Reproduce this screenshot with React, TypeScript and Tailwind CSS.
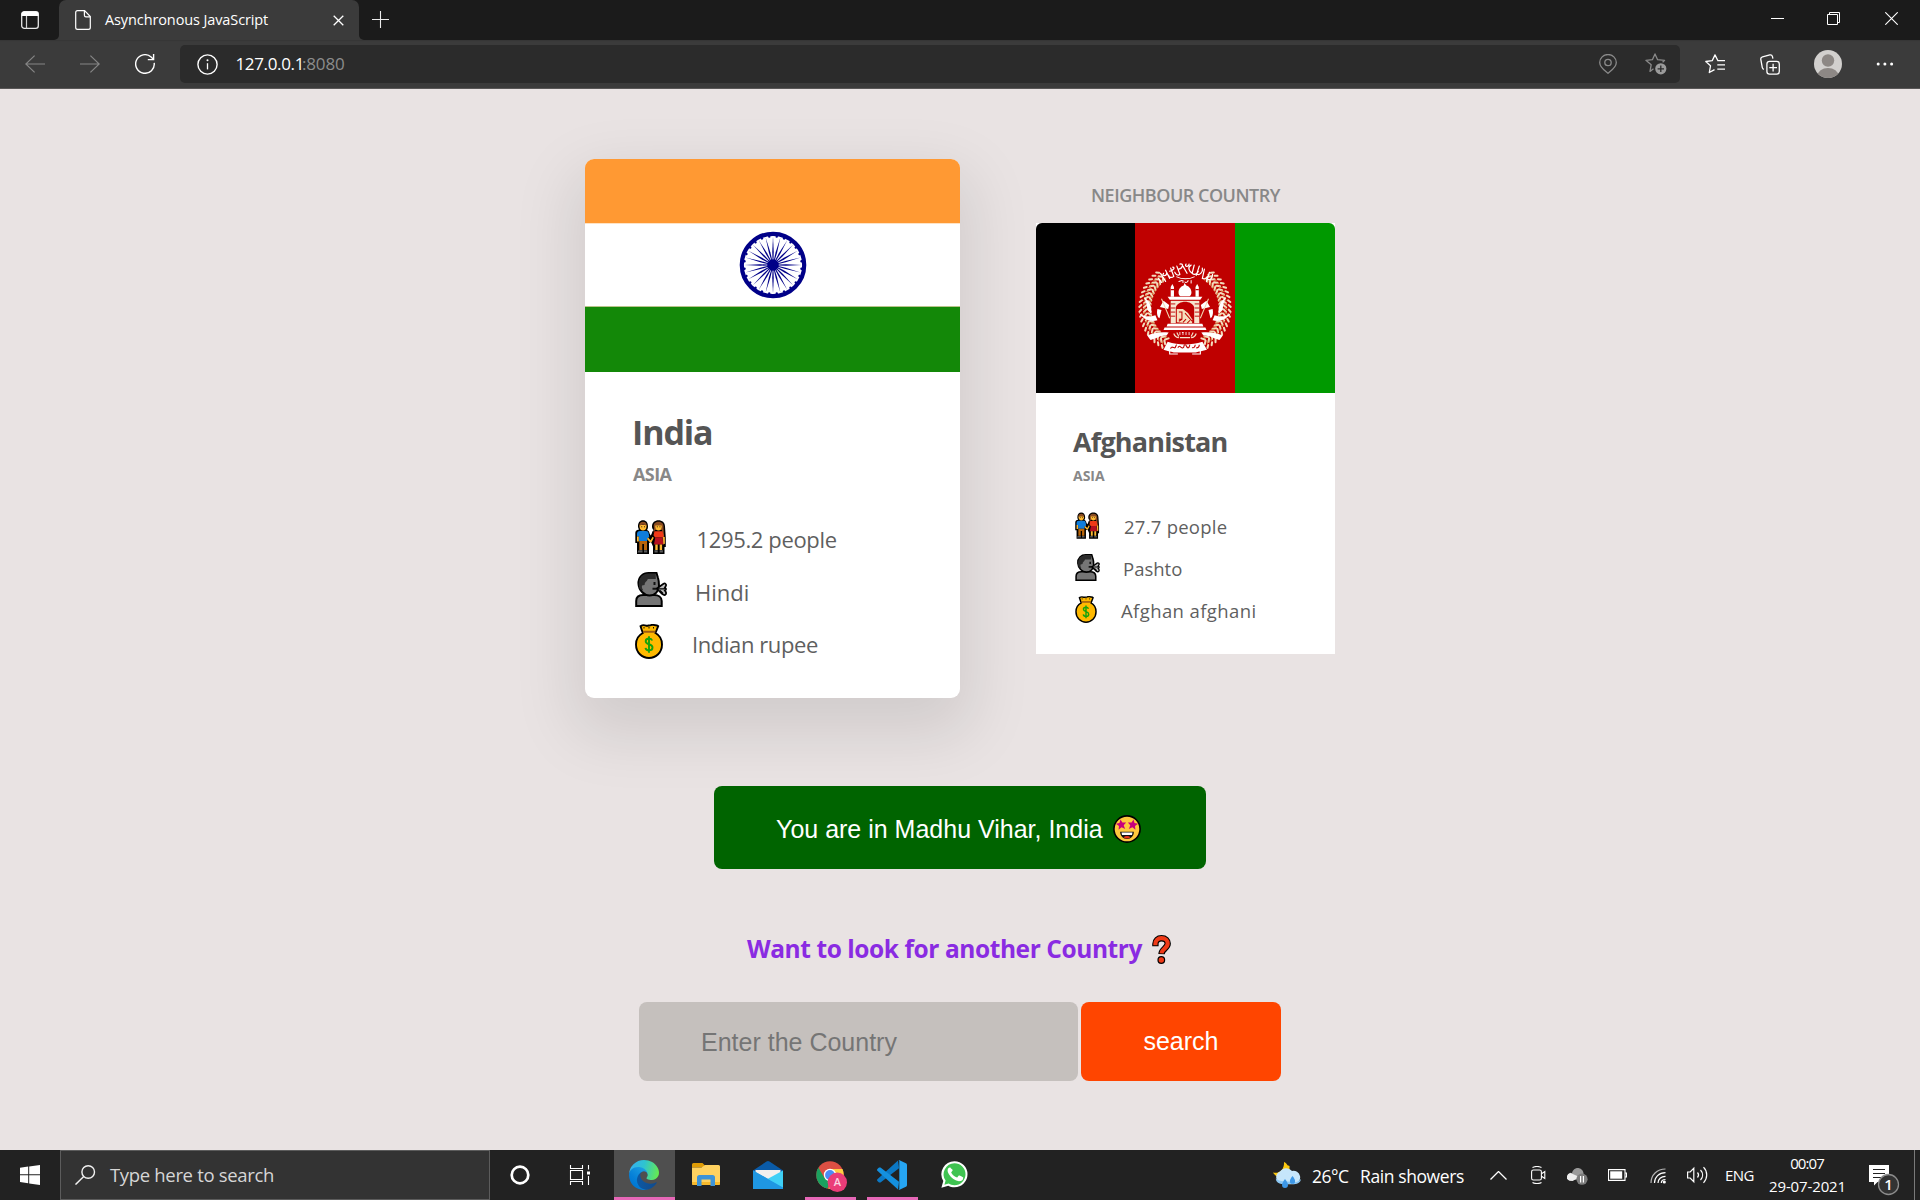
import type { ReactNode } from "react";

/* ---------- browser chrome ---------- */

function TabStrip() {
  return (
    <div className="flex h-10 bg-[#3b3b3b] text-white">
      <div className="flex w-[59px] items-center rounded-br-[5px] bg-[#1b1b1b] pl-[21px]">
        <svg className="h-[18px] w-[18px]" viewBox="0 0 18 18" fill="none">
          <rect x="0.7" y="0.7" width="16.6" height="16.6" rx="2.6" stroke="#e8e8e8" strokeWidth="1.3" />
          <path d="M0.5 5V3.2A2.7 2.7 0 0 1 3.2 0.5h11.6a2.7 2.7 0 0 1 2.7 2.7V5z" fill="#fff" />
          <path d="M5.5 5v12.5" stroke="#d0d0d0" strokeWidth="1.2" />
        </svg>
      </div>
      <div className="bg-[#1b1b1b]">
        <div className="flex h-10 w-[300px] items-center rounded-t-[7px] bg-[#3b3b3b] pl-4">
          <svg className="h-5 w-4 shrink-0" viewBox="0 0 16 20" fill="none" stroke="#fff" strokeWidth="1.2">
            <path d="M2.6 0.7h7l5.7 5.8v11a1.9 1.9 0 0 1-1.9 1.9H2.6a1.9 1.9 0 0 1-1.9-1.9V2.6A1.9 1.9 0 0 1 2.6.7z" />
            <path d="M9.4 0.9v4.3a1.6 1.6 0 0 0 1.6 1.6h4.2" />
          </svg>
          <span className="ml-3.5 w-[228px] whitespace-nowrap text-[14.5px] leading-5 tracking-[-0.11px]">
            Asynchronous JavaScript
          </span>
          <svg className="mt-px h-[11px] w-[11px] shrink-0" viewBox="0 0 11 11" stroke="#fff" strokeWidth="1.3">
            <path d="M0.7 0.7l9.6 9.6M10.3 0.7L0.7 10.3" />
          </svg>
        </div>
      </div>
      <div className="flex flex-1 items-center rounded-bl-[5px] bg-[#1b1b1b] pl-[13px]">
        <svg className="mb-px h-[17px] w-[17px]" viewBox="0 0 17 17" stroke="#ececec" strokeWidth="1.1">
          <path d="M8.5 0v17M0 8.5h17" />
        </svg>
        <div className="ml-auto flex items-center pr-[22px] pb-[3px]">
          <svg className="h-[13px] w-[13px]" viewBox="0 0 13 13" stroke="#fff">
            <path d="M0 6.5h13" />
          </svg>
          <svg className="ml-[43px] h-[13px] w-[13px]" viewBox="0 0 13 13" fill="none" stroke="#fff">
            <path d="M0.5 2.5h10v10h-10zM2.5 2.5v-2h10v10h-2" />
          </svg>
          <svg className="ml-[45px] h-[13px] w-[13px]" viewBox="0 0 13 13" stroke="#fff" strokeWidth="1.1">
            <path d="M0.3 0.3l12.4 12.4M12.7 0.3L0.3 12.7" />
          </svg>
        </div>
      </div>
    </div>
  );
}

function Toolbar() {
  return (
    <div className="flex h-[49px] items-center border-b border-[#595757] bg-[#3b3b3b] pl-[25px] shadow-[inset_0_2px_2px_-2px_rgba(0,0,0,0.3)]">
      <svg className="h-[18px] w-5" viewBox="0 0 20 18" fill="none" stroke="#868686" strokeWidth="1.2">
        <path d="M20 9H0.8M9.6 0.6L0.8 9l8.8 8.4" />
      </svg>
      <svg className="ml-[35px] h-[18px] w-5" viewBox="0 0 20 18" fill="none" stroke="#868686" strokeWidth="1.2">
        <path d="M0 9h19.2M10.4 0.6L19.2 9l-8.8 8.4" />
      </svg>
      <svg className="ml-[35px] h-5 w-5" viewBox="0 0 20 20" fill="none" stroke="#fff" strokeWidth="1.4">
        <path d="M19.2 8.8a9.3 9.3 0 1 1-3.1-5.8l2.3 2.3" />
        <path d="M18.6 0v5.6h-5.8" />
      </svg>
      <div className="ml-[25px] flex h-[38px] w-[1500px] items-center rounded-[5px] bg-[#2b2b2b] pl-[17px]">
        <svg className="h-[21px] w-[21px] shrink-0" viewBox="0 0 21 21" fill="none" stroke="#fff" strokeWidth="1.4">
          <circle cx="10.5" cy="10.5" r="9.6" />
          <path d="M10.5 9.2v6.2" strokeWidth="1.3" />
          <circle cx="10.5" cy="6.3" r="1" fill="#fff" stroke="none" />
        </svg>
        <div className="ml-[17.5px] flex whitespace-nowrap text-[17px] leading-6">
          <span className="w-[66.5px] tracking-[-0.35px] text-white">127.0.0.1</span>
          <span className="tracking-[-0.16px] text-[#8c8c8c]">:8080</span>
        </div>
        <svg className="ml-auto h-5 w-[18px] shrink-0" viewBox="0 0 18 20" fill="none" stroke="#8a8a8a" strokeWidth="1.3">
          <path d="M9 19.3c-1.2-1.1-8.3-5.6-8.3-10.8a8.3 8 0 0 1 16.6 0C17.3 13.7 10.2 18.2 9 19.3z" />
          <circle cx="9" cy="8.5" r="3.2" />
        </svg>
        <svg className="mr-[13px] ml-[28px] h-[22px] w-[22px] shrink-0" viewBox="0 0 22 22" fill="none">
          <path
            d="M8.5 15.7L5 18.4l1.2-6.7L0.9 7.3l6.5-.6L10 0.9l2.6 5.8 7 .6-2 1.9"
            stroke="#8a8a8a"
            strokeWidth="1.3"
            strokeLinejoin="round"
          />
          <circle cx="15.8" cy="15.8" r="5.6" fill="#9a9a9a" />
          <path d="M15.8 12.6v6.4M12.6 15.8H19" stroke="#2b2b2b" strokeWidth="1.3" />
        </svg>
      </div>
      <svg className="ml-[25px] h-5 w-5" viewBox="0 0 20 20" fill="none" stroke="#fff" strokeWidth="1.3">
        <path d="M12.8 6.5L10 0.9 7.2 6.7l-6.4.8 4.7 4.3-1.2 6.7 5.2-2.9" strokeLinejoin="round" />
        <path d="M12.3 6.7H20M12.3 10.9H20M12.3 15.1H20" />
      </svg>
      <svg className="ml-[35px] h-[21px] w-5" viewBox="0 0 20 21" fill="none" stroke="#fff" strokeWidth="1.3">
        <rect x="6.9" y="7.3" width="12.4" height="12.8" rx="2.6" />
        <path d="M13.1 9.8v7.7M9.3 13.7H17" />
        <path d="M3.9 15.3c-.9-.1-1.4-.9-1.6-1.7L.8 5.3c-.2-1.3.6-2.1 1.7-2.4L9.8.9c1.5-.3 2.3.4 2.6 1.5l.5 2.3" />
      </svg>
      <svg className="ml-[34px] h-7 w-7" viewBox="0 0 28 28">
        <clipPath id="avatar">
          <circle cx="14" cy="14" r="14" />
        </clipPath>
        <g clipPath="url(#avatar)">
          <rect width="28" height="28" fill="#d2d0ce" />
          <circle cx="14" cy="10.5" r="6.2" fill="#8d8885" />
          <ellipse cx="14" cy="26" rx="10.5" ry="8" fill="#8d8885" />
        </g>
      </svg>
      <svg className="ml-[34px] h-4 w-[18px]" viewBox="0 0 18 4" fill="#fff">
        <circle cx="2.2" cy="2" r="1.5" />
        <circle cx="8.9" cy="2" r="1.5" />
        <circle cx="15.6" cy="2" r="1.5" />
      </svg>
    </div>
  );
}

/* ---------- flags ---------- */

function IndiaFlag() {
  const spokes = Array.from({ length: 24 }, (_, i) => i * 15);
  return (
    <div className="flex h-[213px] flex-col">
      <div className="h-16 bg-[#ff9933]" />
      <div className="flex h-[84px] items-center justify-center border-t border-b border-t-[#ffe3c4] border-b-[#b9c48a] bg-white">
        <svg className="h-[68px] w-[68px]" viewBox="-34 -34 68 68" fill="#000088">
          <circle r="31.2" fill="none" stroke="#000088" strokeWidth="4.2" />
          <circle r="5.8" />
          {spokes.map((a) => (
            <g key={a} transform={`rotate(${a})`}>
              <path d="M0-28.5L-.75-13-.3 0H.3L.75-13z" />
              <circle cx="0" cy="-28.7" r="1.2" transform="rotate(7.5)" />
            </g>
          ))}
        </svg>
      </div>
      <div className="h-[65px] bg-[#138808]" />
    </div>
  );
}

function WheatSide() {
  const grains = Array.from({ length: 19 }, (_, i) => i);
  return (
    <g fill="none" strokeLinecap="round">
      {grains.map((i) => (
        <g key={i} transform={`rotate(${-142 + i * 6.2})`}>
          <path d="M-1.2 33.8l2.4 2.6M-1.2 40.3l2.4-2.4M-.8 44.8l2-2" stroke="#f3dcbc" strokeWidth="2" />
          <path d="M1.4 33.5l1.2 1.8M1.6 40.8l1.2-1.5" stroke="#d58b4e" strokeWidth="1.1" />
        </g>
      ))}
    </g>
  );
}

function Emblem() {
  return (
    <svg className="h-24 w-24" viewBox="-47 -47 94 94" fill="#fff">
      <g transform="scale(-1 1)">
        <WheatSide />
      </g>
      <WheatSide />
      {/* calligraphy arc */}
      <g fill="none" stroke="#fff" strokeWidth="1.2" strokeLinecap="round">
        <path d="M-26-29l3 4M-24-34l5 8M-21-34c-2 3 3 3 3 0M-19-37l4 8M-14-39l3 8c-2 2-5 1-5-1M-12-40c3 0 0 4-3 4M-8-41l3 8c-2 2-4 0-5-2M-5-43c4-1 3 4-1 5M-2-41l4 7M1-43c-2 3 3 3 3 0M6-42c-4 2-2 6 1 8M9-42l-2 8c2 2 5 1 6-2M14-41l-3 9M17-39c1 4-3 7-5 6M19-38l-2 9c2 1 4 0 5-2M24-35l-3 9M27-33c0 3-2 6-4 5" />
        <path d="M-8-30.500C-3-28 4-28 9-30.500M-6-26l3-1M0-25.500c1 1.500 3-.5 3-1.500M-2-27v2M6-27v2.500" strokeWidth="1" />
      </g>
      {/* mosque */}
      <path d="M-0.500-24.500L1.300-22C4.500-21 6.500-18 6.300-15 6.200-13.500 5.300-12 4.500-11.500h-9C-5.500-12-6.300-13.500-6.300-15-6.500-18-4.500-21-1.300-22z" />
      <path d="M-14-20.500l1.600-3 1.600 3V-11h-3.200zM10.300-20.500l1.600-3 1.600 3V-11h-3.200z" />
      <path d="M-14-18h3.200M10.300-18h3.200" stroke="#bf0000" />
      <path d="M-17-11h34l-2 2.800h-30z" />
      <path d="M-14-7h28v22H-14z" fill="#f6e6cf" />
      <path d="M-9 15V-.5C-8-4-4-6 0-6s8 2 9 5.500V15z" fill="#bf0000" />
      <path d="M-14-4h4.500M9.500-4H14M-14 0h4.500M9.500 0H14M-14 4h4.500M9.500 4H14M-14 8h4.500M9.500 8H14" stroke="#bf0000" strokeWidth="0.9" />
      <path d="M-8 14V1h6l5 4 4 6v4h-4z" fill="#f6dfbd" />
      <path d="M-6 4h3v7h-3M0 5l7 8M-6 13l3-2M-2 14l3-3M2 15l3-3" stroke="#bf0000" strokeWidth="1" fill="none" />
      <path d="M-17 15.500h34l1 2.500h-36zM-20 19h40l1 2.500h-42z" />
      {/* side flags */}
      <path d="M-21-7l-3.500 6 8 2 1-4zM-27 1l4 1-2 8c-2-1-3-5-2-9zM21-7l3.500 6-8 2-1-4zM27 1l-4 1 2 8c2-1 3-5 2-9z" />
      <path d="M-23-9l8 19M23-9l-8 19" stroke="#f3d9b4" strokeWidth="1" />
      {/* ribbons */}
      <path d="M-40-11c4 4 8 8 7 17l-4-5c0-5-2-8-3-12zM-45 5c5 4 10 4 16 2l2 5c-6 2-13 0-18-7zM-37 27c5-2 12-4 21-3l-2 3c-6-1-11 4-16 4z" />
      <path d="M40-11c-4 4-8 8-7 17l4-5c0-5 2-8 3-12zM45 5C40 9 35 9 29 7l-2 5c6 2 13 0 18-7zM37 27c-5-2-12-4-21-3l2 3c6-1 11 4 16 4z" />
      <path d="M-11 25c1 3 3 4 5 4M11 25c-1 3-3 4-5 4M-8 24l2 4M8 24l-2 4M-5 29h10" fill="none" stroke="#f6e6cf" strokeWidth="1.1" />
      <path d="M-5 23.500v3M-2 23.500v3M-3 24h1.500M1 23.500v3M4 23.500v3" stroke="#fff" strokeWidth="0.8" />
      <path d="M-17 33c11 3.500 23 3.500 34 0l4.500 8c-4 1-8 2-11 2.500H-11c-3-.5-7-1.500-10-2.500z" />
      <path d="M-15 42v3h8M15 42v3H7" fill="none" stroke="#fff" strokeWidth="1.1" />
      <path d="M-14 40c0-3 3-1 4-1s1-3 2-3M-7 39c2-4 3 1 5 0s0-3 2-3 1 3 3 3 1-3 2-3M7 38.500c1 1 3 0 3-2.500M11 39c2 0 3-1 3-3" fill="none" stroke="#bf0000" strokeWidth="1.1" />
    </svg>
  );
}

function AfghanFlag() {
  return (
    <div className="flex h-[170px] overflow-hidden rounded-t-md">
      <div className="w-[99px] bg-black" />
      <div className="flex w-[100px] items-center justify-center bg-[#bf0000]">
        <Emblem />
      </div>
      <div className="flex-1 bg-[#009900]" />
    </div>
  );
}

/* ---------- emoji-style icons ---------- */

function PeopleIcon({ className }: { className: string }) {
  return (
    <svg className={className} viewBox="0 0 32 34">
      <path
        d="M3 6.500C3 2.500 5 .3 8 .3s5 2.200 5 6.200c0 1.500-.3 2.700-1 3.500 1.500.5 2.300 1.500 2.600 3.500l1 2 1-1.500c.5-2 1-3.200 2.200-3.800C17.200 9 17 7.500 17 6.500 17 2.500 20 .3 23.500.3S30 2.500 30 6.500l.8 11.500V27H29.500v7H18v-7.500L16 22l-2 1v11H2v-11H.3V13c0-2 1-3 3.700-3.500C3.300 8.500 3 7.500 3 6.500z"
      />
      <path d="M4.500 6.500C4.500 9 6 10.500 8 10.500s3.500-1.500 3.500-4V5h-7z" fill="#ffb932" />
      <path d="M4.300 5.800C4.300 3 5.700 1.800 8 1.800s3.700 1.200 3.700 4C9 4.500 7 4.500 4.300 5.800z" fill="#8a4b20" />
      <path d="M2 14c0-2 1-3 3-3h6c2 0 2.500 1 2.800 3l.4 3-2 1.500V21H4v-4.500H2z" fill="#0f7ddb" />
      <path d="M2 16.500h1.800v5H2zM13 17.500l2.600 2.700 2-3.500 1.200 1-2.300 4.500h-1.700L12 19z" fill="#ffb932" />
      <path d="M4.300 21H12v9H9V24H7.300v6h-3z" fill="#b9650a" />
      <path d="M3.500 30.300h4v2.200h-5zM9 30.300h3.200v2.200H9z" fill="#5b5b5b" />
      <path d="M19 8c-1-4 1-6.200 4.500-6.200S29 4 28.500 8l1.200 16h-2L27 10h-7l-1.500 3z" fill="#8a4b20" />
      <path d="M20.300 6.500c0 2.500 1.300 4 3.200 4s3.200-1.500 3.200-4V5.500h-6.400z" fill="#ffb932" />
      <path d="M19.500 11.300h8l1.300 5-1.500 1.200H20l-1.500-2.200z" fill="#f03a17" />
      <path d="M20.300 17.500h6.900l1.300 7h-9.500z" fill="#b50f1f" />
      <path d="M28 17h1.800v6.500l-1.300 1zM20.300 24.500h2.400V30h-2.400zM24.700 24.500h2.400V30h-2.400z" fill="#ffb932" />
      <path d="M19.500 30.300h3.200v2.200h-3.200zM24.700 30.300h3.200v2.200h-3.200z" fill="#5b5b5b" />
      <path d="M6.300 6.800h.9M9 6.800h.9M21.800 6.800h.9M24.500 6.800h.9" stroke="#000" strokeWidth="0.9" />
    </svg>
  );
}

function SpeakingIcon({ className }: { className: string }) {
  return (
    <svg className={className} viewBox="0 0 32 35">
      <path d="M1.200 34v-5c0-4 3-6 7-6h11c4 0 7.500 2 7.500 6v5z" fill="#757575" stroke="#000" strokeWidth="2" />
      <path d="M3.500 12C3 5 8 1 13.500 1h8l1.500 5c.8 2 1 5 1 8 0 5-4 9.500-9.500 9.500S3.800 18 3.500 12z" fill="#757575" stroke="#000" strokeWidth="2" />
      <path d="M4 15C3 6 7 2 13.500 1.500h7.300V7h-8c-1 3-3 2.500-3.200 6L7 13.500c-.5 2 .3 3.500 1.300 5C5.500 18 4.300 17 4 15z" fill="#2b2b2b" />
      <path d="M19.500 10v3M17.500 16.700h4.500" stroke="#111" strokeWidth="2" />
      <path d="M22 16.500l6.500-4.700c1.700-1 3.200.8 2.300 2.200l-1 1.800c1.700.2 1.700 2.200 0 2.700l1 1.500c.9 1.800-.6 3.600-2.300 2.800-2.200-1-4.500-3.800-6.500-6.300z" fill="#bdbdbd" stroke="#000" strokeWidth="1.7" />
      <path d="M23 16.800h7M25 18.500l3 3" stroke="#000" strokeWidth="1.3" />
    </svg>
  );
}

function MoneyBagIcon({ className }: { className: string }) {
  return (
    <svg className={className} viewBox="0 0 28 35">
      <path
        d="M5.500 2.200C7.500.8 9.500 1 11 1.600c1.500.6 3-.6 4.500-.4 1.500-.5 3-.6 4.500 0 1 .2 2.500.1 3.200 1L20.500 9C25 11.500 27 16 27 20.500 27 28.500 21 34 14 34S1 28.500 1 20.500C1 16 3 11.500 7.800 9z"
        fill="#ffb900"
        stroke="#000"
        strokeWidth="1.9"
      />
      <path d="M8 7.700h12.300" stroke="#9a5b12" strokeWidth="2" />
      <path d="M9 4.500v-1.500M14 4.500v-1.500M18.500 4.500v-1.500" stroke="#000" strokeWidth="0.9" />
      <path
        d="M17.200 16.500c-.5-1.300-1.600-2-3.200-2-2 0-3.300 1-3.300 2.700 0 3.800 6.800 2.300 6.800 6.300 0 1.900-1.500 2.900-3.500 2.900-1.800 0-3.200-.9-3.500-2.600M14 12.300v16.500"
        fill="none"
        stroke="#16a30c"
        strokeWidth="1.9"
      />
    </svg>
  );
}

function StarStruckIcon() {
  const star = "M0-5.200L1.500-1.800 5.200-1.500 2.400 1 3.300 4.800 0 2.800-3.300 4.800-2.400 1-5.200-1.500-1.500-1.800z";
  return (
    <svg className="h-7 w-7" viewBox="0 0 28 28">
      <circle cx="14" cy="14" r="13.1" fill="#ffc83d" stroke="#000" strokeWidth="1.6" />
      <path d={star} fill="#c8007c" transform="translate(8.200 9.600) rotate(-8)" />
      <path d={star} fill="#c8007c" transform="translate(19.800 9.600) rotate(8)" />
      <path d="M7.200 16.800h13.600c.3 4-2.800 7.200-6.800 7.200s-7-3.200-6.800-7.200z" fill="#111" />
      <path d="M8.500 17.500h11l-.5 2.400H9z" fill="#fff" />
      <path d="M10.500 22.300c2-1.600 5-1.600 7 0-2 1.600-5 1.600-7 0z" fill="#e8341c" />
    </svg>
  );
}

function QuestionMarkIcon() {
  return (
    <svg className="h-[29px] w-[19px]" viewBox="0 0 19 29" fill="none">
      <path d="M3.400 11.200V9C3.400 5.500 6 3.200 9.500 3.200c4 0 6.200 2.400 6.200 5.400 0 4.800-6 5.200-6.200 10.500" stroke="#000" strokeWidth="6.4" />
      <circle cx="9.3" cy="25" r="3.9" fill="#000" />
      <path d="M3.400 10.200V9C3.400 5.500 6 3.200 9.500 3.200c4 0 6.200 2.400 6.200 5.400 0 4.800-6 5.200-6.200 9.800" stroke="#f03a17" strokeWidth="4.2" />
      <circle cx="9.3" cy="25" r="2.7" fill="#f03a17" />
    </svg>
  );
}

/* ---------- page ---------- */

function IndiaCard() {
  return (
    <article className="h-[539px] w-[375px] overflow-hidden rounded-[9px] bg-white text-[#555] shadow-[0_25px_62px_12px_rgba(0,0,0,0.1)]">
      <IndiaFlag />
      <div className="pt-10 pl-12">
        <h3 className="-ml-px h-10 text-[34px] leading-10 font-bold tracking-[-1.1px]">India</h3>
        <h4 className="mt-3 h-5 text-[18px] leading-5 font-bold tracking-[-0.6px] text-[#888]">ASIA</h4>
        <div className="mt-[29px] flex flex-col text-[22px] leading-[30px] whitespace-nowrap text-[#5f5f5f]">
          <p className="flex h-[52.5px] items-center">
            <PeopleIcon className="mr-[29.5px] mb-[5px] ml-[2px] h-[34px] w-8" />
            <span className="tracking-[-0.36px]">1295.2 people</span>
          </p>
          <p className="flex h-[52.5px] items-center">
            <SpeakingIcon className="mr-[28px] mb-[5px] ml-[2px] h-[35px] w-8" />
            <span>Hindi</span>
          </p>
          <p className="flex h-[52.5px] items-center">
            <MoneyBagIcon className="mr-[29px] mb-[5px] ml-[2px] h-[35px] w-7" />
            <span className="tracking-[-0.4px]">Indian rupee</span>
          </p>
        </div>
      </div>
    </article>
  );
}

function NeighbourCard() {
  return (
    <article className="mt-[14px] h-[431px] w-[299px] bg-white text-[#555]">
      <AfghanFlag />
      <div className="pt-[32px] pl-[37px]">
        <h3 className="h-[33px] text-[27px] leading-[33px] font-bold tracking-[-0.83px]">Afghanistan</h3>
        <h4 className="mt-2 h-[19px] text-[14px] leading-[19px] font-bold text-[#888]">ASIA</h4>
        <div className="mt-[21px] flex flex-col text-[18.5px] leading-6 whitespace-nowrap text-[#5f5f5f]">
          <p className="flex h-[42px] items-center">
            <PeopleIcon className="mr-6 mb-[3px] ml-[2px] h-[27px] w-[25px]" />
            <span className="tracking-[0.25px]">27.7 people</span>
          </p>
          <p className="flex h-[42px] items-center">
            <SpeakingIcon className="mr-[23px] mb-[3px] ml-[2px] h-[27px] w-[25px]" />
            <span>Pashto</span>
          </p>
          <p className="flex h-[42px] items-center">
            <MoneyBagIcon className="mr-6 mb-[3px] ml-[2px] h-[27px] w-[22px]" />
            <span className="tracking-[0.4px]">Afghan afghani</span>
          </p>
        </div>
      </div>
    </article>
  );
}

function Page() {
  return (
    <main className="flex flex-1 flex-col items-center bg-[#e9e3e3] pt-[70px]">
      <section className="flex h-[539px] items-start gap-[76px]">
        <IndiaCard />
        <div className="flex flex-col items-center pt-[22px]">
          <h5 className="h-7 text-[18px] leading-7 font-semibold tracking-[-0.48px] text-[#888]">NEIGHBOUR COUNTRY</h5>
          <NeighbourCard />
        </div>
      </section>
      <div className="mt-[88px] flex h-[83px] w-[492px] items-center rounded-[8px] bg-[#006400] pt-[3px] pl-[62px] font-['Liberation_Sans',sans-serif] text-[25px] leading-8 whitespace-nowrap text-white">
        <span className="w-[337px]">You are in Madhu Vihar, India</span>
        <StarStruckIcon />
      </div>
      <div className="mt-[60px] mr-[2px] flex h-10 w-[424px] items-center justify-between text-[24.5px] leading-10 font-bold whitespace-nowrap text-[#8a2be2]">
        <span className="tracking-[-0.43px]">Want to look for another Country</span>
        <QuestionMarkIcon />
      </div>
      <form className="mt-[33px] flex gap-[3px] font-['Liberation_Sans',sans-serif] text-[25px]">
        <input
          className="h-[79px] w-[439px] rounded-[8px] bg-[#c5c0bd] pt-px pl-[62px] placeholder:text-[#757575]"
          placeholder="Enter the Country"
        />
        <button type="button" className="h-[79px] w-[200px] rounded-[8px] bg-[#ff4500] pt-px text-white">
          search
        </button>
      </form>
    </main>
  );
}

/* ---------- taskbar ---------- */

function AppSlot({ children, active = false, running = false }: { children: ReactNode; active?: boolean; running?: boolean }) {
  return (
    <div className={active ? "flex w-[61px] flex-col items-center bg-[#4f4f4f]" : "flex w-[62px] flex-col items-center"}>
      <div className="flex h-[47px] items-center pt-[3px]">{children}</div>
      {active && <div className="h-[3px] w-full bg-[#e667b7]" />}
      {running && <div className="h-[3px] w-[51px] bg-[#e667b7]" />}
    </div>
  );
}

function EdgeLogo() {
  return (
    <svg className="mr-px h-[30px] w-[30px]" viewBox="0 0 256 256">
      <defs>
        <linearGradient id="e1" x1="63" y1="178" x2="241" y2="178" gradientUnits="userSpaceOnUse">
          <stop offset="0" stopColor="#0c59a4" />
          <stop offset="1" stopColor="#114a8b" />
        </linearGradient>
        <linearGradient id="e2" x1="157" y1="98" x2="46" y2="219" gradientUnits="userSpaceOnUse">
          <stop offset="0" stopColor="#1b9de2" />
          <stop offset="0.2" stopColor="#1595df" />
          <stop offset="0.7" stopColor="#0680d7" />
          <stop offset="1" stopColor="#0078d4" />
        </linearGradient>
        <linearGradient id="e3" x1="10" y1="60" x2="250" y2="120" gradientUnits="userSpaceOnUse">
          <stop offset="0" stopColor="#35b1ee" />
          <stop offset="0.45" stopColor="#2fc3d0" />
          <stop offset="1" stopColor="#66eb4f" />
        </linearGradient>
      </defs>
      <path fill="url(#e1)" d="M231 190.500a94 94 0 0 1-10.500 4.700 101.900 101.900 0 0 1-35.900 6.500c-47.300 0-88.500-32.500-88.500-74.300a31.500 31.500 0 0 1 16.400-27.300c-42.800 1.800-53.800 46.400-53.800 72.500 0 74 68.100 81.400 82.800 81.400 7.900 0 19.800-2.300 27-4.600l1.300-.4a128.300 128.300 0 0 0 66.600-52.800 4 4 0 0 0-5.400-5.700z" />
      <path fill="url(#e2)" d="M105.700 241.400a79.200 79.200 0 0 1-22.700-21.300 80.700 80.700 0 0 1 29.500-120c3.200-1.500 8.500-4.100 15.600-4a32.400 32.400 0 0 1 25.700 13 31.900 31.900 0 0 1 6.300 18.700c0-.2 24.500-79.600-80-79.600-43.900 0-80 41.600-80 78.200a130.200 130.200 0 0 0 12.100 56 128 128 0 0 0 156.400 67 75.600 75.600 0 0 1-62.800-8z" />
      <path fill="url(#e3)" d="M152.300 148.900c-.9 1-3.400 2.500-3.400 5.600 0 2.600 1.700 5.200 4.800 7.300 14.300 10 41.400 8.600 41.500 8.600a59.600 59.600 0 0 0 30.300-8.300 61.400 61.400 0 0 0 30.400-52.900c.3-22.400-8-37.300-11.300-43.900C223.500 23.900 177.700 0 128 0A128 128 0 0 0 0 126.200c.5-36.500 36.800-66 80-66 3.500 0 23.500.3 42 10 16.300 8.600 24.900 19 30.800 29.200 6.200 10.700 7.300 24.100 7.300 29.500s-2.700 13.300-7.800 20z" />
    </svg>
  );
}

function ExplorerLogo() {
  return (
    <svg className="mb-[1px] h-6 w-7" viewBox="0 0 28 24">
      <path d="M0 1.500A1.500 1.500 0 0 1 1.500 0h9l2.500 2.500-2 2H0z" fill="#df9c06" />
      <path d="M0 4.500h9.500L13 2h13.500A1.500 1.500 0 0 1 28 3.500v17a1.500 1.500 0 0 1-1.500 1.500h-25A1.500 1.500 0 0 1 0 20.500z" fill="#ffd260" />
      <path d="M0 19h28v1.500a1.500 1.500 0 0 1-1.500 1.500h-25A1.500 1.500 0 0 1 0 20.500z" fill="#f6b92c" />
      <path d="M5 23V14.500A2.500 2.500 0 0 1 7.500 12h13a2.500 2.500 0 0 1 2.500 2.500V23h-4.500v-6.500h-9V23z" fill="#3c93d8" />
    </svg>
  );
}

function MailLogo() {
  return (
    <svg className="mb-[1px] h-[28px] w-[30px]" viewBox="0 0 30 28">
      <path d="M0 9.500L13.500.6a2.700 2.700 0 0 1 3 0L30 9.500v3H0z" fill="#0a5ba8" />
      <path d="M2.500 9h25v12h-25z" fill="#f2f0ee" />
      <path d="M0 9.500L30 26.500V28H0z" fill="#2ba3e6" />
      <path d="M30 9.500L14.500 18 30 28z" fill="#3fd0f6" />
      <path d="M0 28V9.500L15 18l15 8.500V28z" fill="#1f97e2" />
    </svg>
  );
}

function ChromeLogo() {
  return (
    <svg className="mt-[2px] ml-[2px] h-[31px] w-[31px]" viewBox="0 0 31 31">
      <clipPath id="chrome">
        <circle cx="14" cy="14" r="13.7" />
      </clipPath>
      <g clipPath="url(#chrome)">
        <path d="M0 0h28v28H0z" fill="#dd4f43" />
        <path d="M14 8h14v20H12l7-11z" fill="#ffcd42" />
        <path d="M2 6l6.500 11 5.500 3.500-3 8H0V5z" fill="#1aa15f" />
      </g>
      <circle cx="14" cy="14" r="6.2" fill="#fff" />
      <circle cx="14" cy="14" r="4.9" fill="#4c8bf5" />
      <circle cx="21.3" cy="21.3" r="9.7" fill="#ea3c78" />
      <text x="21.3" y="25.3" textAnchor="middle" fontSize="11" fontWeight="600" fill="#fbd3e0">
        A
      </text>
    </svg>
  );
}

function CodeLogo() {
  return (
    <svg className="h-[30px] w-[30px]" viewBox="0 0 30 30">
      <path d="M22 8.300L3.500 22.500 2 22.500.4 20.900c-.5-.5-.5-1.200 0-1.700L21 .5z" fill="#0b78c4" />
      <path d="M22 21.700L3.500 7.500 2 7.500.4 9.100c-.5.5-.5 1.200 0 1.700L21 29.500z" fill="#1490df" />
      <path d="M22 0l6.900 3.200c.7.300 1.100 1 1.100 1.700v20.200c0 .7-.4 1.400-1.100 1.700L22 30c-.4 0-.7-.2-1-.5.600.5 1.300 0 1.300-.7V1.200c0-.7-.7-1.200-1.300-.7.3-.3.6-.5 1-.5z" fill="#26a5f2" />
    </svg>
  );
}

function WhatsAppLogo() {
  return (
    <svg className="mb-[2px] h-[27px] w-[27px]" viewBox="0 0 27 27">
      <path d="M13.500.3A13 13 0 0 1 13.500 26.300c-2.300 0-4.300-.5-6.200-1.500L.4 26.700l1.900-6.700A13 13 0 0 1 13.500.3z" fill="#fff" />
      <path d="M13.500 2.300a11 11 0 0 1 0 22c-2.200 0-4.100-.6-5.800-1.700l-4.300 1.200 1.200-4.200A11 11 0 0 1 13.500 2.300z" fill="#3fc351" />
      <path
        d="M9.800 7.200c-.3-.7-.6-.7-1-.7-1 0-2.200 1.200-2.200 3 0 1.900 1.300 3.700 1.500 4 .2.300 2.700 4.200 6.600 5.700 3.200 1.300 3.900 1 4.600.9.800-.1 2.300-1 2.600-1.900.3-.9.300-1.700.2-1.900-.1-.2-3.300-1.700-3.700-1.800-.3-.1-.6-.1-.8.200-.3.400-1 1.300-1.200 1.500-.2.300-.5.300-.8.100-.4-.2-1.700-.6-3.100-1.900-1.200-1-2-2.300-2.200-2.700-.2-.3 0-.6.200-.8l1.100-1.400c.1-.3 0-.5 0-.7z"
        fill="#fff"
      />
    </svg>
  );
}

function WeatherIcon() {
  return (
    <svg className="h-[27px] w-7" viewBox="0 0 28 27">
      <path d="M11 0c1.500.6 2.700 1.700 3.500 3.200L16.500 4v9L4 14.500C2.500 13.500 1 12.200 0 10.500 6 12 11.500 8 11 0z" fill="#fbc80f" />
      <path d="M8.500 21.500a6.300 6.300 0 0 1-1.500-12 7.500 7.500 0 0 1 12-.5 6.200 6.200 0 1 1 3 13c-2 .5-12 .5-13.500-.5z" fill="#c6e6fb" />
      <path d="M9 22a6 6 0 0 1-6.300-5.500C6.500 20 14 19 20 20c3 .5 6-.5 8-3-.5 4-4 5-7 5z" fill="#8cc8f4" />
      <path d="M12 17c2 2.500 3 4.500 3 6a3 3 0 0 1-6 0c0-1.500 1-3.500 3-6zM19.500 14c1.800 2.300 2.600 3.800 2.600 5.200a2.600 2.600 0 0 1-5.200 0c0-1.400.8-2.900 2.600-5.200z" fill="#3d97e6" />
    </svg>
  );
}

function Taskbar() {
  return (
    <footer className="flex h-[50px] bg-[#222222] text-white">
      <div className="flex w-[60px] items-center justify-center">
        <svg className="h-5 w-5" viewBox="0 0 20 20" fill="#fff">
          <path d="M0 2.700L8.200 1.600v7.700H0zM9.200 1.400L20 0v9.300H9.200zM0 10.300h8.200v7.900L0 17.100zM9.200 10.300H20V20L9.200 18.400z" />
        </svg>
      </div>
      <div className="flex w-[430px] items-center border border-[#5c5c5c] bg-[#333333] pl-[14px]">
        <svg className="h-5 w-[21px]" viewBox="0 0 21 20" fill="none" stroke="#f2f2f2" strokeWidth="1.4">
          <circle cx="13.2" cy="7" r="6.3" />
          <path d="M8.700 11.500L0.500 19.600" />
        </svg>
        <span className="ml-3.5 text-[18.5px] leading-6 tracking-[-0.33px] whitespace-nowrap text-[#d6d6d6]">Type here to search</span>
      </div>
      <div className="flex w-[60px] items-center justify-center">
        <svg className="h-5 w-5" viewBox="0 0 20 20" fill="none" stroke="#fff" strokeWidth="2.7">
          <circle cx="10" cy="10" r="8.3" />
        </svg>
      </div>
      <div className="flex w-16 items-center pl-[19px]">
        <svg className="mb-px h-5 w-[22px]" viewBox="0 0 22 20" fill="none" stroke="#fff" strokeWidth="1.1">
          <path d="M1.500 0v3.500h12V0M1.500 20v-3.500h12V20M1.500 5.500h12v9h-12zM19.500 0v4.500M19.500 11v9" />
          <path d="M18 6.500h3v3h-3z" fill="#fff" stroke="none" />
        </svg>
      </div>
      <AppSlot active>
        <EdgeLogo />
      </AppSlot>
      <AppSlot>
        <ExplorerLogo />
      </AppSlot>
      <AppSlot>
        <MailLogo />
      </AppSlot>
      <AppSlot running>
        <ChromeLogo />
      </AppSlot>
      <AppSlot running>
        <CodeLogo />
      </AppSlot>
      <AppSlot>
        <WhatsAppLogo />
      </AppSlot>
      <div className="ml-auto flex items-center whitespace-nowrap">
        <WeatherIcon />
        <span className="ml-[11px] w-12 pt-[2px] text-[17.5px] leading-6 tracking-[-0.5px]">26°C</span>
        <span className="w-[130px] pt-[2px] text-[17.5px] leading-6 tracking-[-0.4px]">Rain showers</span>
        <svg className="h-[9px] w-[17px]" viewBox="0 0 17 9" fill="none" stroke="#fff" strokeWidth="1.3">
          <path d="M0.500 8.500l8-8 8 8" />
        </svg>
        <svg className="ml-[24px] h-[18px] w-[15px]" viewBox="0 0 15 18" fill="none" stroke="#fff" strokeWidth="1.1">
          <rect x="0.6" y="4" width="9.8" height="10" rx="1.8" />
          <path d="M10.500 7.700l3.300-2.200v7l-3.300-2.200M1.500 1.500c2.500-1.200 6.500-1.200 9 0M1.500 16.500c2.500 1.200 6.500 1.200 9 0" />
        </svg>
        <svg className="mt-[2px] ml-[21px] h-[17px] w-[21px]" viewBox="0 0 21 17">
          <path d="M5 5a5.500 5.500 0 0 1 11.500 1.500L17 10 3 13A4.500 4.500 0 0 1 3 4.800z" fill="#9a9a9a" />
          <path d="M2 12.500A4 4 0 0 1 3.500 5l9 4-7 4z" fill="#ededed" />
          <circle cx="15" cy="11.2" r="5.6" fill="#7d7d7d" />
          <path d="M13.600 8v6.500M16.400 8v6.500" stroke="#fff" strokeWidth="1.2" />
        </svg>
        <svg className="ml-5 h-3 w-[19px]" viewBox="0 0 19 12" fill="none" stroke="#fff" strokeWidth="1.1">
          <path d="M0.500 0.600h16.500v10.800H0.500zM17 4h1.500v4H17" />
          <path d="M2.200 2.300h12v7.400h-12z" fill="#fff" stroke="none" />
        </svg>
        <svg className="mt-[2px] ml-[23px] h-4 w-[17px]" viewBox="0 0 17 16" fill="none" stroke="#fff" strokeWidth="1.2">
          <path d="M1 15C1 7 7 1 15.500 1" stroke="#b5b5b5" />
          <path d="M4.500 15c0-6 4.500-10.300 11-10.300M8 15c0-3.700 3-6.700 7.500-6.700M11.300 15c0-2 1.700-3.500 4.200-3.500" />
          <circle cx="14.3" cy="14" r="1.6" fill="#fff" stroke="none" />
        </svg>
        <svg className="ml-5 h-[18px] w-[21px]" viewBox="0 0 21 18" fill="none" stroke="#fff" strokeWidth="1.2">
          <path d="M0.600 6h2.600l3.600-3.700v13.400L3.200 12H0.600zM10.500 6.500c1.300 1.500 1.300 3.500 0 5M13.500 4c2.800 3 2.800 7 0 10M16.500 1.200c4.300 4.500 4.300 11 0 15.600" />
        </svg>
        <span className="ml-[17px] w-[45px] text-[15px] leading-5 tracking-[-0.6px]">ENG</span>
        <div className="flex w-[75px] flex-col items-center text-[15px] leading-[23px]">
          <span className="mr-px tracking-[-0.9px]">00:07</span>
          <span className="tracking-[-0.13px]">29-07-2021</span>
        </div>
        <svg className="mt-[11px] ml-[24px] h-[31px] w-[31px]" viewBox="0 0 31 31">
          <path d="M0 0h20v17H8.500L5 20.500V17H0z" fill="#fff" />
          <path d="M4 4.500h12M4 8.500h12M4 12.500h9" stroke="#222" strokeWidth="1.1" />
          <circle cx="19.5" cy="19.5" r="10" fill="#333" stroke="#8c8c8c" strokeWidth="1.3" />
          <text x="19.5" y="24.8" textAnchor="middle" fontSize="15" fontWeight="600" fill="#fff">
            1
          </text>
        </svg>
        <div className="ml-[14px] h-[50px] w-[6px] border-l border-[#7a7a7a]" />
      </div>
    </footer>
  );
}

export default function App() {
  return (
    <div className="flex h-[1200px] w-[1920px] flex-col overflow-hidden font-['Open_Sans','Noto_Sans',sans-serif]">
      <TabStrip />
      <Toolbar />
      <Page />
      <Taskbar />
    </div>
  );
}
